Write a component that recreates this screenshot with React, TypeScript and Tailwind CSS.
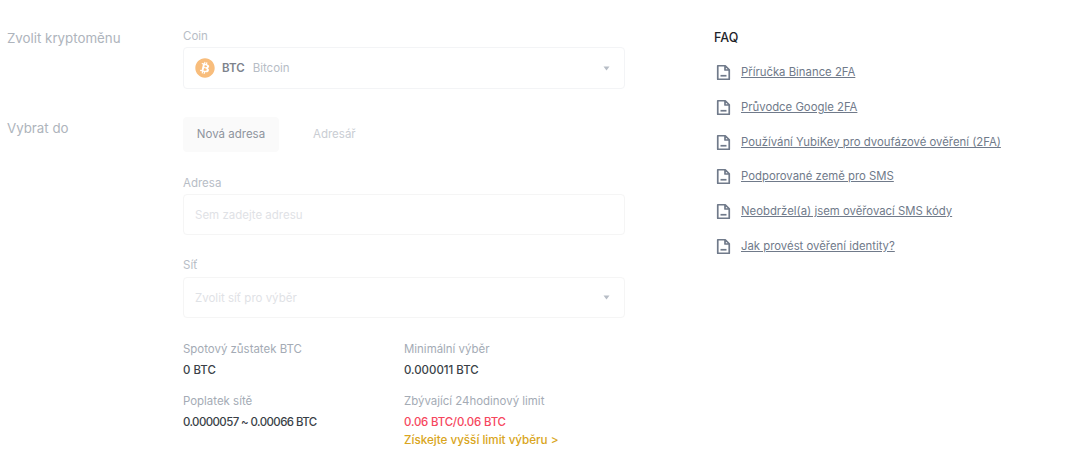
import { FaBitcoin } from "react-icons/fa";

const faqLinks = [
  "Příručka Binance 2FA",
  "Průvodce Google 2FA",
  "Používání YubiKey pro dvoufázové ověření (2FA)",
  "Podporované země pro SMS",
  "Neobdržel(a) jsem ověřovací SMS kódy",
  "Jak provést ověření identity?",
];

function Caret({ color }: { color: string }) {
  return (
    <svg width="7" height="5" viewBox="0 0 7 5" className="shrink-0">
      <path d="M0.5 0.5h6L3.5 4.5z" fill={color} />
    </svg>
  );
}

function DocIcon() {
  return (
    <svg width="16" height="17" viewBox="0 0 16 17" fill="none" className="shrink-0">
      <path
        d="M1.75 1.75h7.5l4 4v9.5h-11.5z M9 1.75v4.25h4.25"
        stroke="#707a8a"
        strokeWidth="1.7"
        strokeLinejoin="round"
      />
      <path d="M4.5 11.75h6" stroke="#707a8a" strokeWidth="1.7" />
    </svg>
  );
}

export default function App() {
  return (
    <div className="flex w-[1080px] h-[471px] bg-white overflow-hidden font-['Inter','Noto_Sans',sans-serif]">
      {/* left labels */}
      <div className="w-[183px] shrink-0 pl-[7px] pt-[28px] text-[13.3px] leading-[20px] text-[#aeb4bc]">
        <div>Zvolit kryptoměnu</div>
        <div className="mt-[70px]">Vybrat do</div>
      </div>

      {/* form */}
      <div className="w-[442px] shrink-0 pt-[27px]">
        <div className="pt-px text-[11.5px] leading-[16px] text-[#b7bdc6]">Coin</div>
        <div className="mt-[3px] h-[42px] rounded border border-[#f3f4f6] flex items-center pl-[11px] pr-[14px]">
          <FaBitcoin className="w-[20px] h-[20px] text-[#f8bd7c] shrink-0" />
          <span className="ml-[7px] pt-[2px] text-[11.5px] font-semibold text-[#7d838c]">BTC</span>
          <span className="ml-[8px] pt-[2px] text-[11.5px] text-[#b7bdc6]">Bitcoin</span>
          <div className="ml-auto">
            <Caret color="#b7bdc6" />
          </div>
        </div>

        <div className="mt-[28px] flex items-center text-[11.5px]">
          <div className="w-[96px] h-[35px] rounded bg-[#fafafa] flex items-center justify-center text-[#8f959e]">
            Nová adresa
          </div>
          <div className="ml-[34px] text-[#c9cdd3]">Adresář</div>
        </div>

        <div className="mt-[22px] pt-px text-[11.5px] leading-[16px] text-[#b7bdc6]">Adresa</div>
        <div className="mt-[3px] h-[41px] pt-[2px] rounded border border-[#f5f5f5] flex items-center px-[11px] text-[11.5px] text-[#dfe2e6]">
          Sem zadejte adresu
        </div>

        <div className="mt-[21px] pt-px text-[11.5px] leading-[16px] text-[#b7bdc6]">Síť</div>
        <div className="mt-[4px] h-[41px] rounded border border-[#f5f5f5] flex items-center justify-between pl-[11px] pr-[14px] text-[11.5px] text-[#dfe2e6]">
          <span className="pt-[2px]">Zvolit síť pro výběr</span>
          <Caret color="#b7bdc6" />
        </div>

        <div className="mt-[22px] grid grid-cols-[221px_1fr] text-[11.45px] leading-[18px]">
          <div className="text-[#a4abb5]">Spotový zůstatek BTC</div>
          <div className="text-[#a4abb5]">Minimální výběr</div>
          <div className="mt-[3px] font-medium text-[#3a3f47]">0 BTC</div>
          <div className="mt-[3px] font-medium text-[#3a3f47]">0.000011 BTC</div>
          <div className="mt-[13px] text-[#a4abb5]">Poplatek sítě</div>
          <div className="mt-[13px] text-[#a4abb5]">Zbývající 24hodinový limit</div>
          <div className="mt-[3px] font-medium text-[#3a3f47] tracking-[-0.05em]">0.0000057 ~ 0.00066 BTC</div>
          <div className="mt-[3px] font-medium">
            <div className="text-[#f6465d] tracking-[-0.015em]">0.06 BTC/0.06 BTC</div>
            <div className="text-[#d9a520] text-[11.65px]">Získejte vyšší limit výběru &gt;</div>
          </div>
        </div>
      </div>

      {/* faq */}
      <div className="ml-[89px] pt-[28px]">
        <div className="text-[12.5px] leading-[20px] font-medium text-[#1e2329]">FAQ</div>
        <div className="mt-[16px] flex flex-col gap-[17.8px]">
          {faqLinks.map((t) => (
            <div key={t} className="flex items-center h-[17px] pl-[2px]">
              <DocIcon />
              <a className="ml-[9px] text-[11.35px] text-[#707a8a] underline">{t}</a>
            </div>
          ))}
        </div>
      </div>
    </div>
  );
}
